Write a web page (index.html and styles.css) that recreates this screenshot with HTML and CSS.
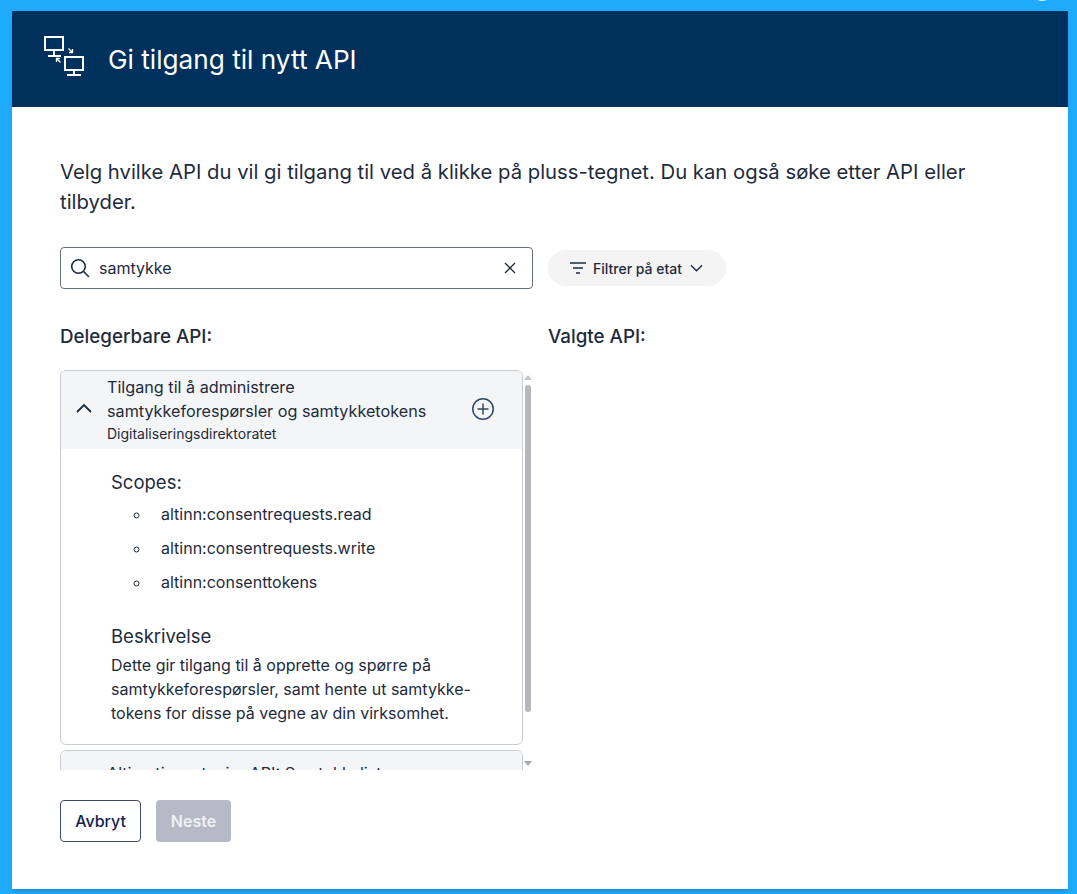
FILE: index.html
```html
<!DOCTYPE html>
<html lang="no">
<head>
<meta charset="utf-8">
<title>Gi tilgang til nytt API</title>
<link rel="stylesheet" href="styles.css">
</head>
<body>
<span class="corner-dot"></span>
<div class="modal">
  <header class="modal-header">
    <svg class="header-icon" viewBox="0 0 40 40" fill="none" stroke="#fff" stroke-width="2">
      <rect x="1" y="1" width="18" height="13"/>
      <path d="M10 14v6M4 20h13"/>
      <rect x="21" y="21" width="18" height="13"/>
      <path d="M30 34v5M23 39h14"/>
      <path d="M24.500 12.500l4 4M28.500 13v3.500h-3.500M16.500 26.500l-4-4M12.500 26v-3.500h3.500" stroke-width="1.300"/>
    </svg>
    <h1 class="modal-title">Gi tilgang til nytt API</h1>
  </header>
  <main class="modal-body">
    <p class="intro">Velg hvilke API du vil gi tilgang til ved å klikke på pluss-tegnet. Du kan også søke etter API eller tilbyder.</p>
    <div class="search-row">
      <div class="search-box">
        <svg class="search-icon" viewBox="0 0 20 20" fill="none" stroke="#1e2b3c" stroke-width="1.600"><circle cx="8.500" cy="8.500" r="6.800"/><path d="M13.300 13.300l5.700 5.700"/></svg>
        <span class="search-value">samtykke</span>
        <svg class="clear-icon" viewBox="0 0 12 12" fill="none" stroke="#1e2b3c" stroke-width="1.300"><path d="M1 1l10 10M11 1L1 11"/></svg>
      </div>
      <button class="filter-btn">
        <svg class="filter-icon" viewBox="0 0 18 14" fill="none" stroke="#1e2b3c" stroke-width="1.500"><path d="M1 2h16M4 7h10M7 12h4"/></svg>
        <span>Filtrer på etat</span>
        <svg class="filter-chev" viewBox="0 0 14 8" fill="none" stroke="#1e2b3c" stroke-width="1.500"><path d="M1 1l6 6 6-6"/></svg>
      </button>
    </div>
    <div class="columns">
      <section class="col-left">
        <h2 class="col-title">Delegerbare API:</h2>
        <div class="list-wrap">
          <div class="list-clip">
            <article class="card">
              <div class="card-head">
                <svg class="chev" viewBox="0 0 16 10" fill="none" stroke="#1e2b3c" stroke-width="1.800"><path d="M1 9l7-7 7 7"/></svg>
                <div class="card-text">
                  <div class="card-title">Tilgang til å administrere samtykkeforespørsler og samtykketokens</div>
                  <div class="card-owner">Digitaliseringsdirektoratet</div>
                </div>
                <svg class="plus" viewBox="0 0 24 24" fill="none" stroke="#2f4a66" stroke-width="1.500"><circle cx="12" cy="12" r="10.250"/><path d="M12 6.500v11M6.500 12h11"/></svg>
              </div>
              <div class="card-body">
                <h3 class="sub-title">Scopes:</h3>
                <ul class="scopes">
                  <li>altinn:consentrequests.read</li>
                  <li>altinn:consentrequests.write</li>
                  <li>altinn:consenttokens</li>
                </ul>
                <h3 class="sub-title desc-title">Beskrivelse</h3>
                <p class="desc">Dette gir tilgang til å opprette og spørre på samtykkeforespørsler, samt hente ut samtykke-tokens for disse på vegne av din virksomhet.</p>
              </div>
            </article>
            <article class="card card-next">
              <div class="card-head">
                <div class="card-text next-text">
                  <div class="card-title">Altinn tjenesteeier API: Samtykkeliste</div>
                </div>
              </div>
            </article>
          </div>
          <div class="scrollbar">
            <span class="arrow-up"></span>
            <span class="thumb"></span>
            <span class="arrow-down"></span>
          </div>
        </div>
      </section>
      <section class="col-right">
        <h2 class="col-title">Valgte API:</h2>
      </section>
    </div>
    <div class="actions">
      <button class="btn btn-outline">Avbryt</button>
      <button class="btn btn-disabled">Neste</button>
    </div>
  </main>
</div>
</body>
</html>
```
FILE: styles.css
```css
* { box-sizing: border-box; }
html, body { height: 100%; }
body {
  margin: 0;
  background: #1eabfb;
  padding: 11px 9px 5px 12px;
  font-family: Inter, "Liberation Sans", sans-serif;
  color: #1e2b3c;
  overflow: hidden;
  position: relative;
}
.corner-dot { position: absolute; top: -23px; left: 1030px; width: 24px; height: 24px; border-radius: 50%; background: #d8f0ff; }
.modal { background: #fff; height: 878px; display: flex; flex-direction: column; box-shadow: 0 4px 4px -2px rgba(0, 0, 0, .2); }
.modal-header {
  background: #00315d;
  height: 96px;
  padding: 25px 0 0 32px;
  display: flex;
  align-items: flex-start;
  color: #fff;
}
.header-icon { width: 40px; height: 40px; flex: none; }
.modal-title { margin: 8px 0 0 24px; font-size: 26.200px; font-weight: 400; line-height: 32px; }
.modal-body { padding: 50px 48px 0; flex: 1; display: flex; flex-direction: column; }
.intro { margin: 0; font-size: 20.300px; line-height: 30px; width: 930px; }
.search-row { display: flex; align-items: center; gap: 15px; margin-top: 30px; }
.search-box {
  width: 473px; height: 42px;
  border: 1px solid #68707c;
  border-radius: 4px;
  display: flex; align-items: center;
  padding: 0 16px 0 9px;
}
.search-icon { width: 20px; height: 20px; flex: none; }
.search-value { margin-left: 9px; font-size: 16px; flex: 1; }
.clear-icon { width: 12px; height: 12px; flex: none; }
.filter-btn {
  width: 178px; height: 36px;
  border: 0; border-radius: 18px;
  background: #f4f4f5;
  display: flex; align-items: center;
  padding: 0 0 0 21px;
  font: 500 14px Inter, "Liberation Sans", sans-serif;
  color: #1e2b3c;
}
.filter-icon { width: 18px; height: 14px; margin-right: 6px; flex: none; }
.filter-chev { width: 13px; height: 8px; margin-left: 8px; flex: none; }
.columns { display: flex; gap: 15px; margin-top: 34px; }
.col-left { width: 473px; }
.col-title { margin: 0; font-size: 18.800px; font-weight: 500; line-height: 28px; }
.list-wrap { display: flex; margin-top: 19px; height: 400px; }
.list-clip { width: 463px; overflow: hidden; }
.card { border: 1px solid #c9cdd2; border-radius: 6px; overflow: hidden; }
.card-next { margin-top: 5px; background: #f4f5f6; height: 60px; }
.card-head {
  background: #f4f5f6;
  display: flex; align-items: center;
  padding: 3px 27px 4px 15px;
  min-height: 78px;
}
.chev { width: 16px; height: 10px; flex: none; margin-right: 15px; margin-top: -3px; }
.card-text { flex: 1; }
.next-text { padding: 7px 0 0 31px; align-self: flex-start; }
.card-title { font-size: 16.200px; line-height: 24px; width: 340px; }
.card-owner { font-size: 14px; line-height: 20px; margin-top: 1px; }
.plus { width: 24px; height: 24px; flex: none; margin-top: -2px; }
.card-body { padding: 21px 20px 19px 50px; }
.sub-title { margin: 0; font-size: 18.500px; font-weight: 400; line-height: 24px; }
.scopes { list-style: circle; margin: 3px 0 0; padding: 0 0 0 40px; font-size: 16px; }
.scopes li { line-height: 34px; padding-left: 10px; }
.desc-title { margin-top: 25px; }
.desc { margin: 5px 0 0; font-size: 16px; line-height: 24px; width: 380px; }
.scrollbar { width: 10px; position: relative; height: 100%; }
.thumb { position: absolute; left: 2px; top: 15px; width: 6px; height: 327px; background: #b5b7ba; border-radius: 3px; }
.arrow-up, .arrow-down { position: absolute; left: 1px; width: 0; height: 0; border-left: 4px solid transparent; border-right: 4px solid transparent; }
.arrow-up { top: 5px; border-bottom: 5px solid #c4c6c9; }
.arrow-down { bottom: 4px; border-top: 5px solid #a8aaad; }
.actions { display: flex; gap: 15px; margin-top: 30px; }
.btn { height: 42px; border-radius: 4px; font: 500 16px Inter, "Liberation Sans", sans-serif; }
.btn-outline { width: 81px; background: #fff; border: 1px solid #41486b; color: #14224f; }
.btn-disabled { width: 75px; background: #b6bac6; border: 0; color: #f0f1f5; font-weight: 600; }
```
